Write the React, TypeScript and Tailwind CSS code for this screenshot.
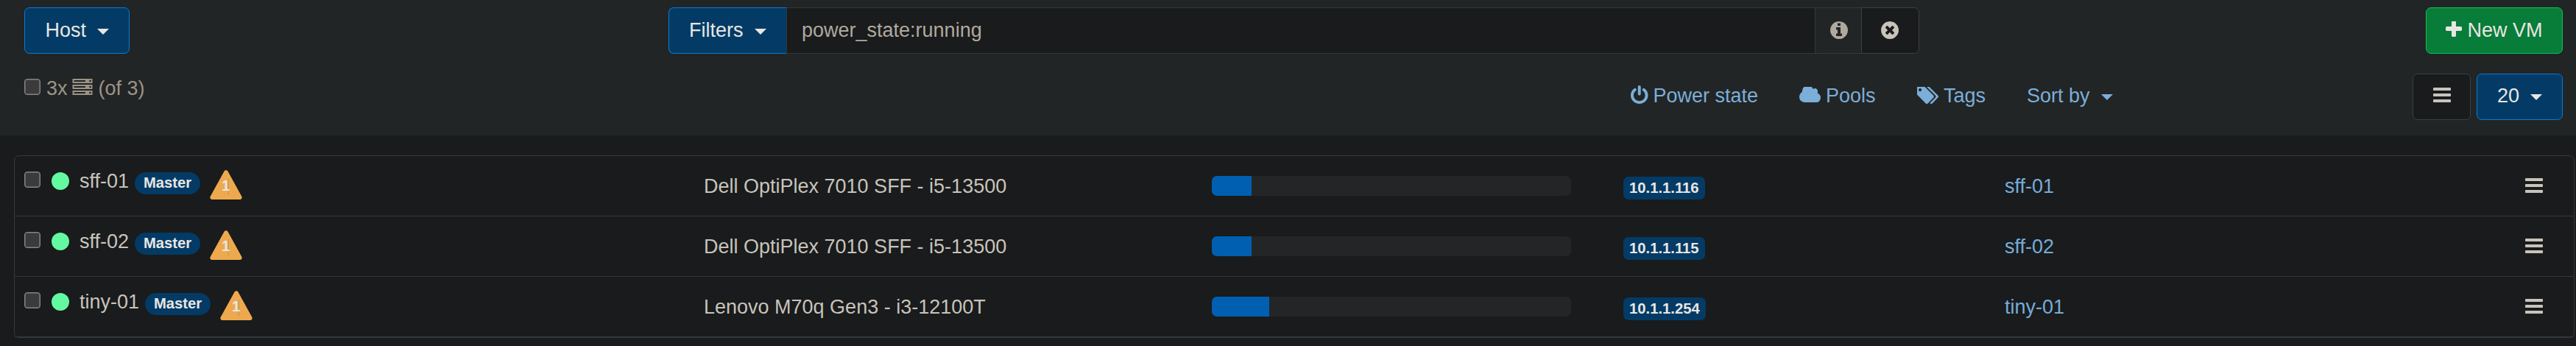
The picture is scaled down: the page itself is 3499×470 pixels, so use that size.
import React from 'react';

const ICONS = {
  power:
    'M1664 896q0 156-61 298t-164 245-245 164-298 61-298-61-245-164-164-245-61-298q0-182 80.5-343t226.5-270q43-32 95.5-25t83.5 50q32 42 24.5 94.5t-49.5 84.5q-98 74-151.5 181t-53.5 228q0 104 40.5 198.5t109.5 163.5 163.5 109.5 198.5 40.5 198.5-40.5 163.5-109.5 109.5-163.5 40.5-198.5q0-121-53.5-228t-151.5-181q-42-32-49.5-84.5t24.5-94.5q31-43 84-50t95 25q146 109 226.5 270t80.5 343zm-640-768v640q0 52-38 90t-90 38-90-38-38-90v-640q0-52 38-90t90-38 90 38 38 90z',
  plus:
    'M1600 736v192q0 40-28 68t-68 28h-416v416q0 40-28 68t-68 28h-192q-40 0-68-28t-28-68v-416h-416q-40 0-68-28t-28-68v-192q0-40 28-68t68-28h416v-416q0-40 28-68t68-28h192q40 0 68 28t28 68v416h416q40 0 68 28t28 68z',
  bars:
    'M1664 1344v128q0 26-19 45t-45 19h-1408q-26 0-45-19t-19-45v-128q0-26 19-45t45-19h1408q26 0 45 19t19 45zm0-512v128q0 26-19 45t-45 19h-1408q-26 0-45-19t-19-45v-128q0-26 19-45t45-19h1408q26 0 45 19t19 45zm0-512v128q0 26-19 45t-45 19h-1408q-26 0-45-19t-19-45v-128q0-26 19-45t45-19h1408q26 0 45 19t19 45z',
  cloud:
    'M1856 1152q0 159-112.5 271.5t-271.5 112.5h-1088q-185 0-316.5-131.5t-131.5-316.5q0-132 71-241.5t187-163.5q-2-28-2-43 0-212 150-362t362-150q158 0 286.5 88t187.5 230q70-62 166-62 106 0 181 75t75 181q0 75-41 138 129 30 213 134.5t84 239.5z',
  tags:
    'M384 448q0-53-37.5-90.5t-90.5-37.5-90.5 37.5-37.5 90.5 37.5 90.5 90.5 37.5 90.5-37.5 37.5-90.5zm1067 576q0 53-37 90l-491 492q-39 37-91 37-53 0-90-37l-715-716q-38-37-64.5-101t-26.5-117v-416q0-52 38-90t90-38h416q53 0 117 26.5t102 64.5l715 714q37 39 37 91zm384 0q0 53-37 90l-491 492q-39 37-91 37-36 0-59-14t-53-45l470-470q37-37 37-90 0-52-37-91l-715-714q-38-38-102-64.5t-117-26.5h224q53 0 117 26.5t102 64.5l715 714q37 39 37 91z',
  clear:
    'M1277 1122q0-26-19-45l-181-181 181-181q19-19 19-45 0-27-19-46l-90-90q-19-19-46-19-26 0-45 19l-181 181-181-181q-19-19-45-19-27 0-46 19l-90 90q-19 19-19 46 0 26 19 45l181 181-181 181q-19 19-19 45 0 27 19 46l90 90q19 19 46 19 26 0 45-19l181-181 181 181q19 19 45 19 27 0 46-19l90-90q19-19 19-46zm387-226q0 209-103 385.5t-279.5 279.5-385.5 103-385.5-103-279.5-279.5-103-385.5 103-385.5 279.5-279.5 385.5-103 385.5 103 279.5 279.5 103 385.5z',
  info:
    'M1152 1376v-160q0-14-9-23t-23-9h-96v-512q0-14-9-23t-23-9h-320q-14 0-23 9t-9 23v160q0 14 9 23t23 9h96v320h-96q-14 0-23 9t-9 23v160q0 14 9 23t23 9h448q14 0 23-9t9-23zm-128-896v-160q0-14-9-23t-23-9h-192q-14 0-23 9t-9 23v160q0 14 9 23t23 9h192q14 0 23-9t9-23zm640 416q0 209-103 385.5t-279.5 279.5-385.5 103-385.5-103-279.5-279.5-103-385.5 103-385.5 279.5-279.5 385.5-103 385.5 103 279.5 279.5 103 385.5z',
};

// viewBox is cut to the ink of each glyph: [x, y, width, height]
const BOXES: Record<keyof typeof ICONS, string> = {
  power: '128 0 1536 1664',
  plus: '192 192 1408 1408',
  bars: '128 256 1536 1280',
  cloud: '-64 256 1920 1280',
  tags: '0 192 1835 1451',
  clear: '128 128 1536 1536',
  info: '128 128 1536 1536',
};

function Icon({ name, className }: { name: keyof typeof ICONS; className: string }) {
  return (
    <svg viewBox={BOXES[name]} preserveAspectRatio="none" fill="currentColor" className={`shrink-0 ${className}`}>
      <path d={ICONS[name]} />
    </svg>
  );
}

function Caret({ className }: { className: string }) {
  return (
    <svg viewBox="0 0 16 8" fill="currentColor" className={`mt-[3px] h-2 w-4 shrink-0 ${className}`}>
      <path d="M0 0H16L8 8Z" />
    </svg>
  );
}

function ServerIcon() {
  return (
    <svg viewBox="0 0 28 22" className="mr-[7.5px] ml-[6.5px] mt-[7px] h-[22px] w-7 shrink-0 self-start">
      {[0, 8, 16].map((y) => (
        <g key={y}>
          <rect x="0.5" y={y} width="27" height="6" rx="0.5" fill="#9d9486" />
          <rect x="2.5" y={y + 2} width="15.5" height="2" fill="#222526" />
          <rect x="23.2" y={y + 1.8} width="2.6" height="2.4" rx="1" fill="#222526" />
        </g>
      ))}
    </svg>
  );
}

function Checkbox({ className }: { className: string }) {
  return (
    <span
      role="checkbox"
      aria-checked="false"
      className={`block h-[22px] w-[22px] shrink-0 rounded-[4px] border border-[#858585] bg-[#3b3b3b] shadow-[inset_0_0_0_0.5px_#858585] ${className}`}
    />
  );
}

function Warning() {
  return (
    <span className="relative mt-[19px] ml-[13px] block h-10 w-11 shrink-0">
      <svg viewBox="0 0 44 40" className="block h-10 w-11">
        <path d="M19.6 1.6Q22 -1.4 24.4 1.6L43.4 36Q44.4 39.6 41.2 40H2.8Q-0.4 39.6 0.6 36Z" fill="#eea94f" />
        <path d="M25.3 12V34" stroke="#a99a55" strokeWidth="1" />
      </svg>
      <span className="absolute left-4 top-[10px] text-[20.25px] leading-[23px] font-bold text-[#e8e6e3]">1</span>
    </span>
  );
}

const HOSTS = [
  { name: 'sff-01', description: 'Dell OptiPlex 7010 SFF - i5-13500', memory: 11, ip: '10.1.1.116' },
  { name: 'sff-02', description: 'Dell OptiPlex 7010 SFF - i5-13500', memory: 11, ip: '10.1.1.115' },
  { name: 'tiny-01', description: 'Lenovo M70q Gen3 - i3-12100T', memory: 16, ip: '10.1.1.254' },
];

function Header() {
  return (
    <header className="h-[184px] bg-[#222526] pt-[10px] pl-[33px] pr-[18px]">
      <div className="flex h-[63px]">
        <button className="flex w-[143px] items-center rounded-[7px] border border-[#0a7ad4] bg-[#033b66] pb-px pl-[27.5px] text-[#e8e6e3]">
          Host
          <Caret className="ml-[15px]" />
        </button>
        <div className="ml-[732px] flex w-[1699px]">
          <button className="flex w-[160px] items-center rounded-l-[7px] border border-r-0 border-[#0a7ad4] bg-[#033b66] pb-px pl-[27px] text-[#e8e6e3]">
            Filters
            <Caret className="ml-[15px]" />
          </button>
          <div className="flex flex-1 items-center border-y border-l border-y-[#353839] border-l-[#2d3940] bg-[#191b1c] pb-px pl-[20px] text-[#b0a99e]">
            power_state:running
          </div>
          <div className="flex w-[63px] items-center border-y border-l border-[#353839] bg-[#222526] pl-5 text-[#b0a99e]">
            <Icon name="info" className="mb-[2px] h-6 w-6" />
          </div>
          <button className="flex w-[79px] items-center rounded-r-[7px] border border-[#3c4144] bg-[#191b1c] pl-[26px] text-[#c8c3bb]">
            <Icon name="clear" className="mb-[2px] h-6 w-6" />
          </button>
        </div>
        <button className="ml-auto flex w-[186px] items-center rounded-[7px] border border-[#0cc357] bg-[#087c39] pb-px pl-[26px] text-[#e8e6e3]">
          <Icon name="plus" className="mb-[3px] mr-[7.5px] h-[22px] w-[22px]" />
          New VM
        </button>
      </div>
      <div className="mt-[27px] flex h-[63px] text-[#9d9486]">
        <Checkbox className="mt-[7px]" />
        <div className="flex w-[2160px] pl-2">
          3x
          <ServerIcon />
          (of 3)
        </div>
        <nav className="flex items-center pb-[3px] text-[#7baed8]">
          <a className="flex w-[229px] items-center">
            <Icon name="power" className="mb-[3px] mr-[7px] h-[25px] w-[23.5px]" />
            Power state
          </a>
          <a className="flex w-[160px] items-center">
            <Icon name="cloud" className="mb-[3px] mr-[7px] h-[21px] w-[29px]" />
            Pools
          </a>
          <a className="flex w-[149px] items-center">
            <Icon name="tags" className="mb-[2px] mr-[7px] h-[23px] w-[29px]" />
            Tags
          </a>
          <a className="flex items-center">
            Sort by
            <Caret className="ml-[15px]" />
          </a>
        </nav>
        <button className="ml-auto flex w-[79px] items-center rounded-[7px] border border-[#3c4144] bg-[#191b1c] pl-[27px] text-[#c8c3bb]">
          <Icon name="bars" className="mb-[5px] h-5 w-6" />
        </button>
        <button className="ml-2 flex w-[117px] items-center rounded-[7px] border border-[#0a7ad4] bg-[#033b66] pb-[3px] pl-[27px] text-[#e8e6e3]">
          20
          <Caret className="ml-[15px]" />
        </button>
      </div>
    </header>
  );
}

export default function App() {
  return (
    <div className="h-[470px] w-[3499px] overflow-hidden bg-[#1a1b1d] font-['Liberation_Sans',Arial,sans-serif] text-[27px] leading-[40px] whitespace-nowrap">
      <Header />
      <main className="mt-[27px] ml-[19px] h-[248px] w-[3478px] rounded-[7px] border border-[#35383a] bg-[#191b1c]">
        {HOSTS.map((host) => (
          <div key={host.name} className="flex h-[82px] border-b border-[#35383a] text-[#c8c3bb]">
            <div className="flex w-[936px] pl-[13px]">
              <Checkbox className="mt-[21px]" />
              <span className="mt-[22px] ml-[15px] block h-6 w-6 shrink-0 rounded-full bg-[#63f9a1]" />
              <span className="mt-[14px] ml-[14px]">{host.name}</span>
              <span className="mt-[22px] ml-2 flex h-[30px] w-[89px] justify-center rounded-full bg-[#033b66] text-[20.25px] leading-[28px] font-bold text-[#e8e6e3]">
                Master
              </span>
              <Warning />
            </div>
            <div className="w-[690px] pt-[21px]">{host.description}</div>
            <div className="flex w-[559px] items-center">
              <div className="h-[27px] w-[488px] overflow-hidden rounded-[7px] bg-[#232527]">
                <div className="h-full bg-[#005fb0]" style={{ width: `${host.memory}%` }} />
              </div>
            </div>
            <div className="w-[518px] pt-7">
              <span className="flex h-[31px] w-fit rounded-[7px] bg-[#033b66] px-2 text-[20.25px] leading-[31px] font-bold text-[#e8e6e3]">
                {host.ip}
              </span>
            </div>
            <div className="w-[707px] pt-[21px] text-[#76acda]">{host.name}</div>
            <div className="pt-[30px]">
              <Icon name="bars" className="h-5 w-6" />
            </div>
          </div>
        ))}
      </main>
    </div>
  );
}
